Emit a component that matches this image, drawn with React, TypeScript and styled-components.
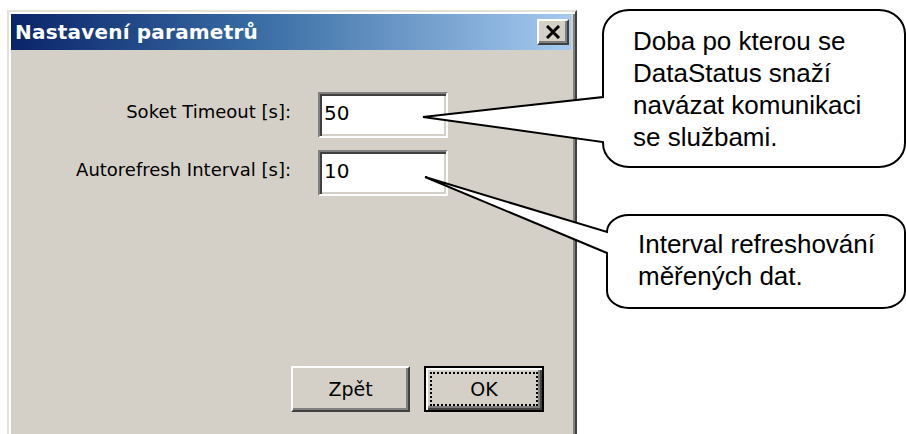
import React from "react";
import styled, { createGlobalStyle } from "styled-components";

const GlobalStyle = createGlobalStyle`
  html, body {
    margin: 0;
    padding: 0;
    background: #ffffff;
    overflow: hidden;
  }
  * { box-sizing: border-box; }
`;

const Page = styled.div`
  position: relative;
  width: 906px;
  height: 434px;
  overflow: hidden;
  padding: 10px 0 0 7px;
  background: #ffffff;
`;

const Window = styled.div`
  width: 570px;
  height: 440px;
  background: #d4d0c8;
  border: 2px solid;
  border-color: #e4e1da #404040 #404040 #e4e1da;
  box-shadow: inset 2px 2px 0 #ffffff, inset -2px -2px 0 #808080;
  padding: 2px 4px 2px 2px;
  display: flex;
  flex-direction: column;
`;

const TitleBar = styled.div`
  height: 36px;
  display: flex;
  align-items: center;
  justify-content: space-between;
  padding: 0 2px 0 2px;
  background: linear-gradient(to right, #0a246a 0%, #3a6ea5 45%, #a6caf0 100%);
`;

const Title = styled.span`
  font-family: "DejaVu Sans", "Liberation Sans", sans-serif;
  font-weight: bold;
  font-size: 20px;
  color: #ffffff;
  letter-spacing: 0.2px;
  padding-left: 2px;
`;

const CloseButton = styled.div`
  width: 32px;
  height: 26px;
  background: #d4d0c8;
  border: 2px solid;
  border-color: #ffffff #404040 #404040 #ffffff;
  box-shadow: inset -2px -2px 0 #808080;
  display: flex;
  align-items: center;
  justify-content: center;
`;

const Body = styled.div`
  flex: 1;
  display: flex;
  flex-direction: column;
  padding-top: 42px;
`;

const FieldGrid = styled.div`
  display: grid;
  grid-template-columns: 280px 130px;
  grid-auto-rows: 46px;
  column-gap: 27px;
  row-gap: 12px;
`;

const Label = styled.label`
  font-family: "DejaVu Sans", "Liberation Sans", sans-serif;
  font-size: 18px;
  line-height: 21px;
  color: #000000;
  text-align: right;
  padding-top: 9px;
`;

const TextBox = styled.input`
  width: 130px;
  height: 46px;
  margin: 0;
  background: #ffffff;
  border: 2px solid;
  border-color: #808080 #ffffff #ffffff #808080;
  box-shadow: inset 2px 2px 0 #404040, inset -2px -2px 0 #d4d0c8;
  padding: 0 4px 5px 4px;
  font-family: "DejaVu Sans", "Liberation Sans", sans-serif;
  font-size: 20px;
  color: #000000;
  outline: none;
`;

const ButtonRow = styled.div`
  display: flex;
  justify-content: flex-end;
  gap: 14px;
  margin-top: 170px;
  padding-right: 27px;
`;

const Button = styled.button<{ $default?: boolean }>`
  width: ${(p) => (p.$default ? 120 : 119)}px;
  height: 46px;
  margin: 0;
  padding: 0;
  background: #d4d0c8;
  font-family: "DejaVu Sans", "Liberation Sans", sans-serif;
  font-size: 19px;
  color: #000000;
  border: 2px solid;
  border-color: ${(p) =>
    p.$default ? "#000000" : "#ffffff #404040 #404040 #ffffff"};
  box-shadow: ${(p) =>
    p.$default
      ? "inset 2px 2px 0 #ffffff, inset -2px -2px 0 #404040, inset -4px -4px 0 #808080"
      : "inset -2px -2px 0 #808080"};
  outline: ${(p) => (p.$default ? "2px dotted #000000" : "none")};
  outline-offset: -8px;
`;

const Overlay = styled.svg`
  position: absolute;
  left: 0;
  top: 0;
  pointer-events: none;
`;

const CalloutText = styled.div<{ $x: number; $y: number }>`
  position: absolute;
  left: ${(p) => p.$x}px;
  top: ${(p) => p.$y}px;
  font-family: "Liberation Sans", Arial, sans-serif;
  font-size: 26px;
  line-height: 32px;
  color: #000000;
  white-space: nowrap;
`;

export default function App() {
  return (
    <>
      <GlobalStyle />
      <Page>
        <Window>
          <TitleBar>
            <Title>Nastavení parametrů</Title>
            <CloseButton>
              <svg width="16" height="14" viewBox="0 0 16 14">
                <path
                  d="M2 1 L14 13 M14 1 L2 13"
                  stroke="#000"
                  strokeWidth="3"
                  fill="none"
                />
              </svg>
            </CloseButton>
          </TitleBar>
          <Body>
            <FieldGrid>
              <Label>Soket Timeout [s]:</Label>
              <TextBox defaultValue="50" readOnly />
              <Label>Autorefresh Interval [s]:</Label>
              <TextBox defaultValue="10" readOnly />
            </FieldGrid>
            <ButtonRow>
              <Button>Zpět</Button>
              <Button $default>OK</Button>
            </ButtonRow>
          </Body>
        </Window>

        <Overlay width="906" height="434" viewBox="0 0 906 434">
          <path
            d="M 629 10 H 879 A 26 24 0 0 1 905 34 V 143 A 26 24 0 0 1 879 167 H 629 A 26 24 0 0 1 603 143 V 142 L 423 117 L 603 97 V 34 A 26 24 0 0 1 629 10 Z"
            fill="#ffffff"
            stroke="#000000"
            strokeWidth="2"
            strokeLinejoin="miter"
          />
          <path
            d="M 629 215 H 883 A 22 17 0 0 1 905 232 V 291 A 22 17 0 0 1 883 308 H 629 A 22 17 0 0 1 607 291 V 253 L 425 177 L 607 232 A 22 17 0 0 1 629 215 Z"
            fill="#ffffff"
            stroke="#000000"
            strokeWidth="2"
          />
        </Overlay>
        <CalloutText $x={633} $y={25}>
          Doba po kterou se
          <br />
          DataStatus snaží
          <br />
          navázat komunikaci
          <br />
          se službami.
        </CalloutText>
        <CalloutText $x={638} $y={228}>
          Interval refreshování
          <br />
          měřených dat.
        </CalloutText>
      </Page>
    </>
  );
}
